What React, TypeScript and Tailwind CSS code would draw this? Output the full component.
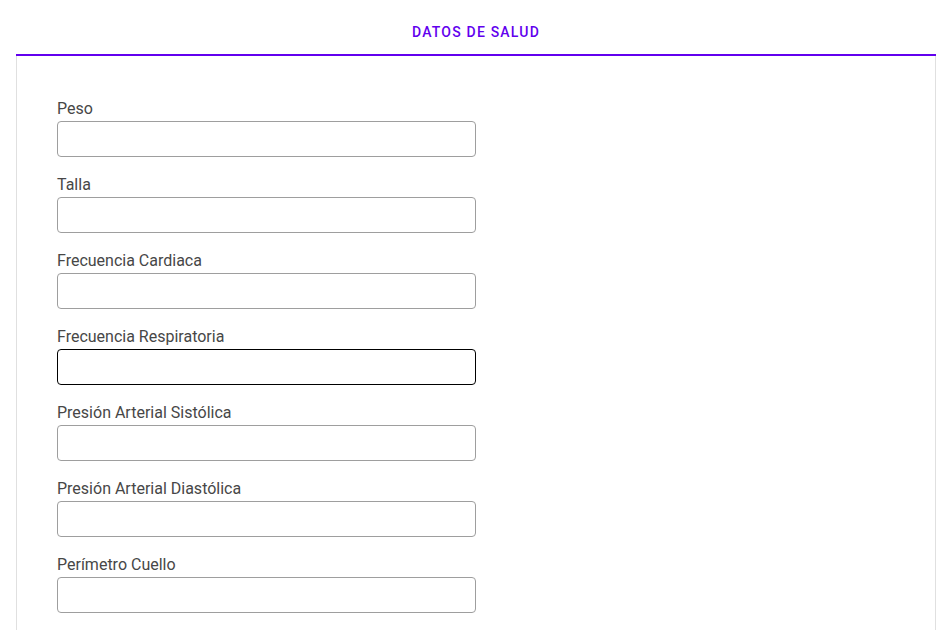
import React from "react";

const fields = [
  "Peso",
  "Talla",
  "Frecuencia Cardiaca",
  "Frecuencia Respiratoria",
  "Presión Arterial Sistólica",
  "Presión Arterial Diastólica",
  "Perímetro Cuello",
];

const App = () => {
  return (
    <div className="h-[630px] overflow-hidden bg-white pl-4 pr-[7px] font-['Roboto',sans-serif]">
      <div className="flex h-[56px] items-start justify-center border-b-2 border-[#6200ee] pt-[24px]">
        <span className="text-[14px] leading-4 font-medium tracking-[1.2px] text-[#6200ee]">
          DATOS DE SALUD
        </span>
      </div>
      <div className="min-h-[600px] border-x border-[#e0e0e0] px-10 pt-[43px]">
        <div className="flex w-[419px] flex-col gap-[18px]">
          {fields.map((f, i) => (
            <div key={f} className="flex flex-col">
              <label className="h-[22px] text-[16px] leading-5 text-[#474747]">{f}</label>
              <input
                className={
                  i === 3
                    ? "h-9 rounded border border-black bg-white px-3 outline-none"
                    : "h-9 rounded border border-[#9e9e9e] bg-white px-3 outline-none"
                }
              />
            </div>
          ))}
        </div>
      </div>
    </div>
  );
};

export default App;
